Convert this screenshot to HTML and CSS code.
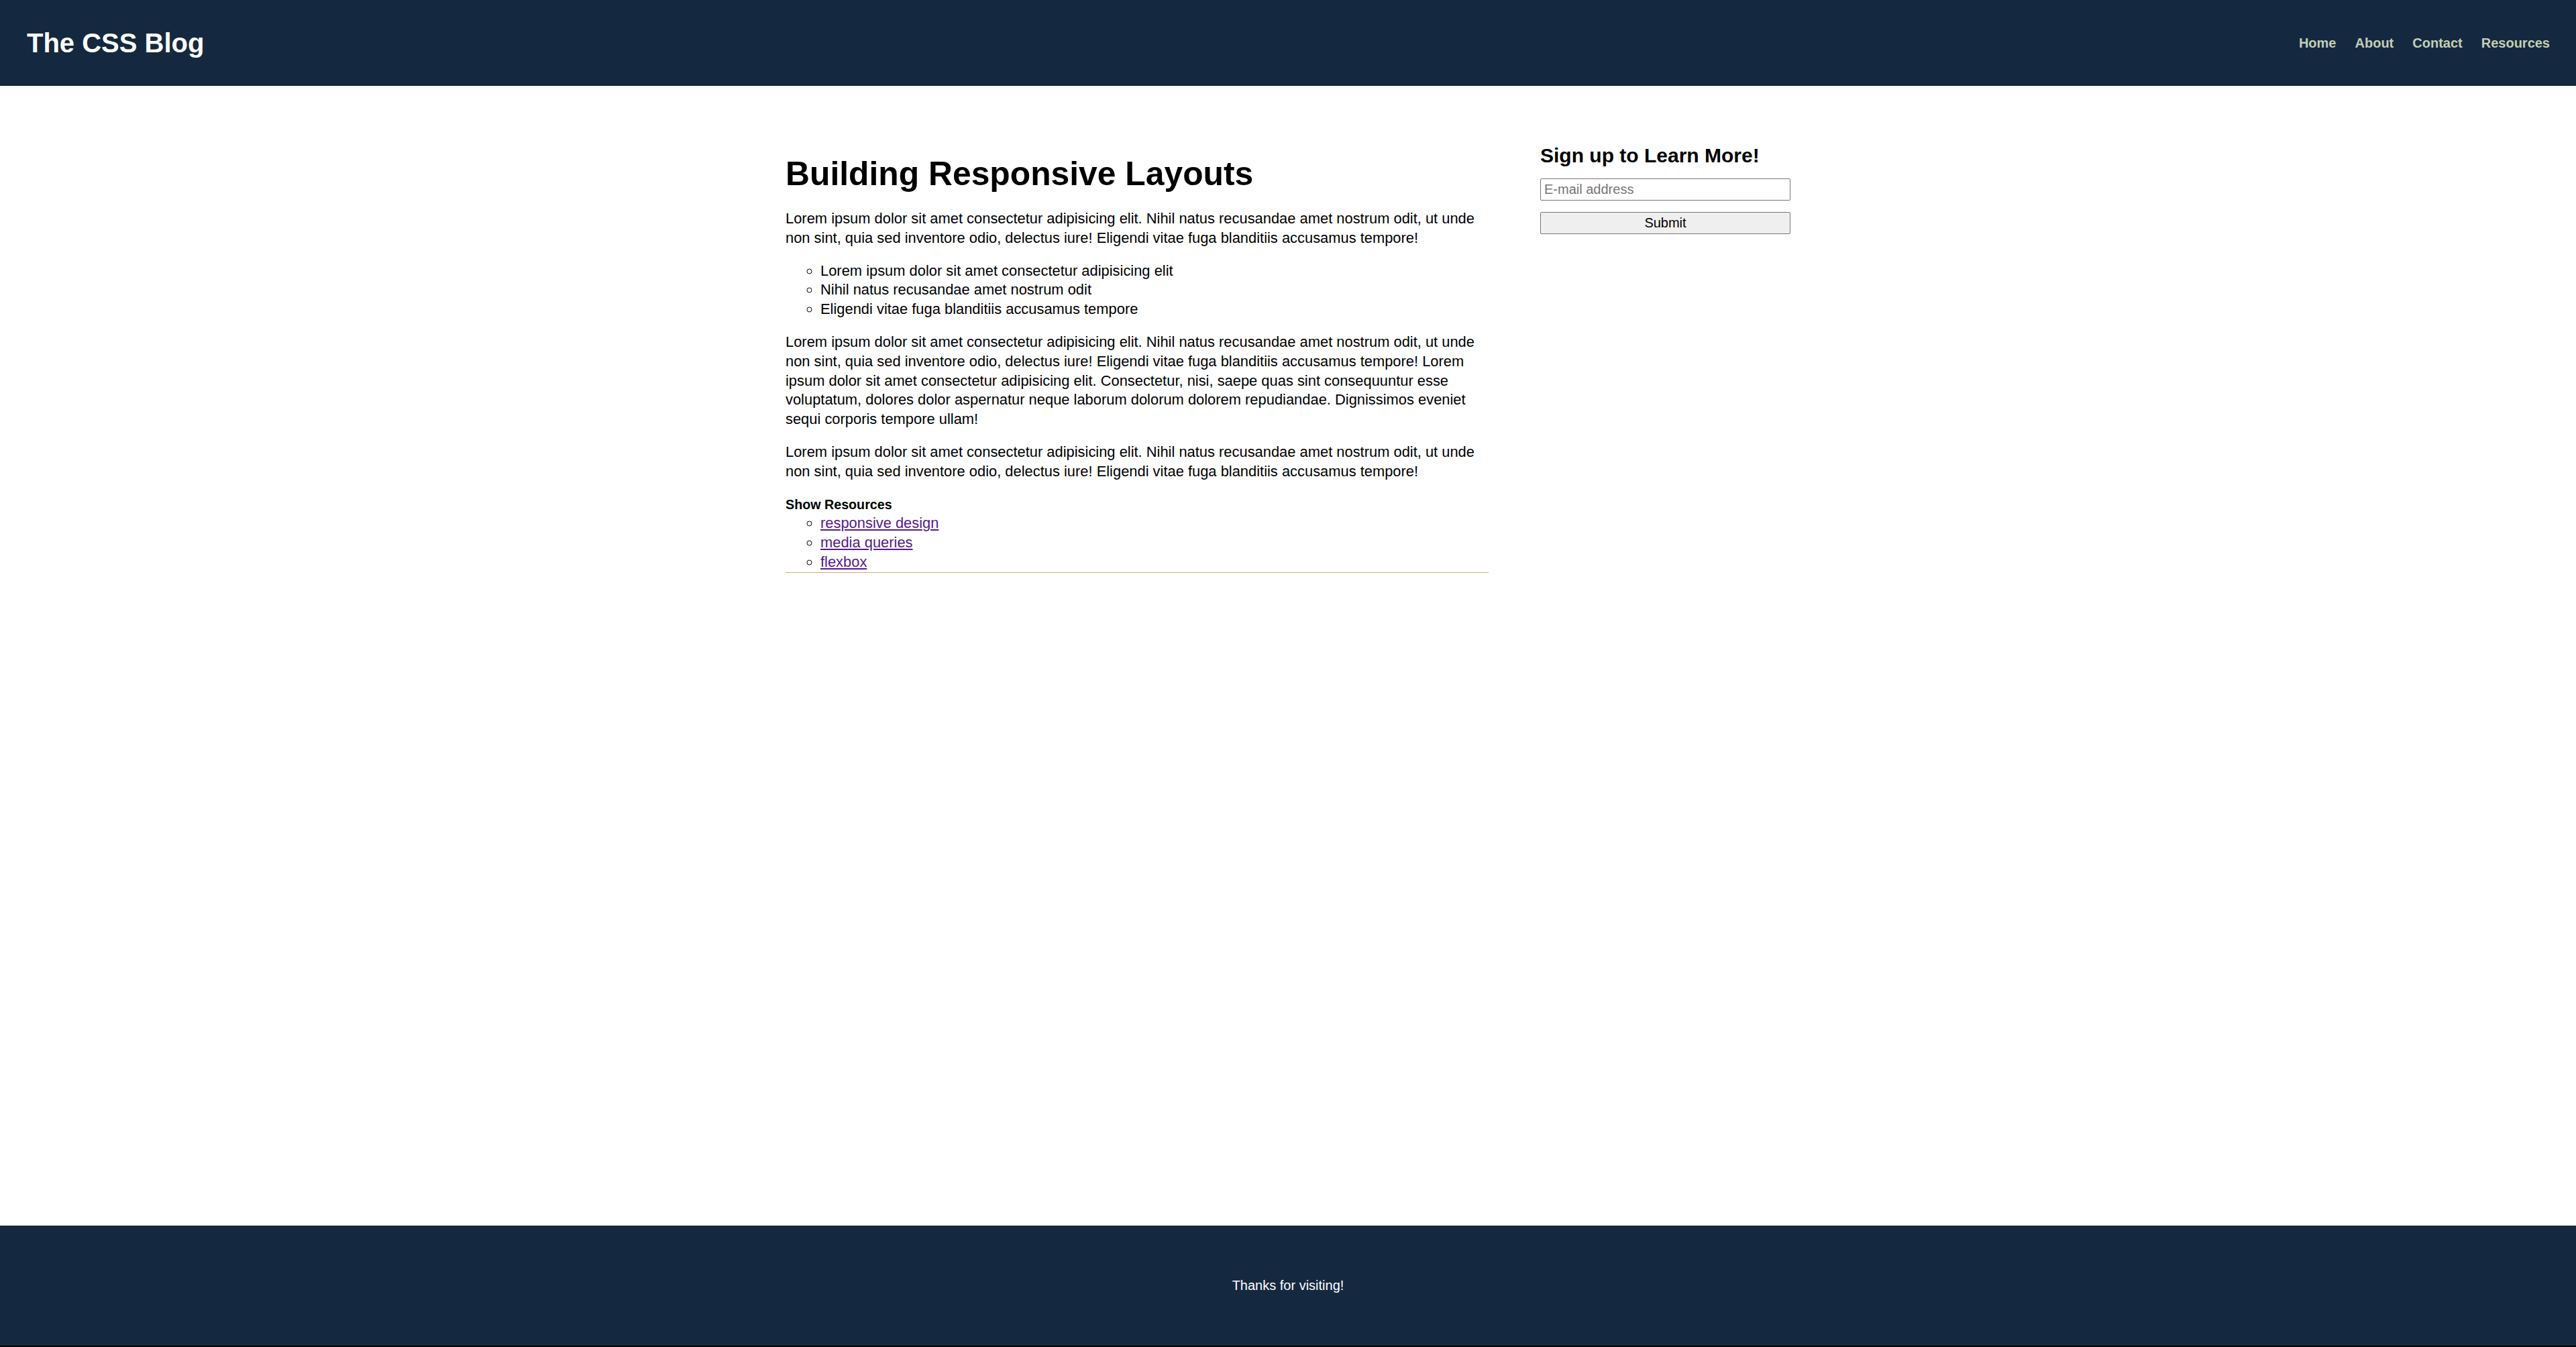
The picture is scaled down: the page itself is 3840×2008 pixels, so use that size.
FILE: index.html
```html
<!DOCTYPE html>
<html lang="en">
<head>
<meta charset="utf-8">
<title>The CSS Blog</title>
<link rel="stylesheet" href="styles.css">
</head>
<body>
<header class="site-header">
  <div class="brand">The CSS Blog</div>
  <nav class="nav">
    <a href="#">Home</a>
    <a href="#">About</a>
    <a href="#">Contact</a>
    <a href="#">Resources</a>
  </nav>
</header>
<main class="layout">
  <article class="post">
    <h1 class="post-title">Building Responsive Layouts</h1>
    <p class="text">Lorem ipsum dolor sit amet consectetur adipisicing elit. Nihil natus recusandae amet nostrum odit, ut unde non sint, quia sed inventore odio, delectus iure! Eligendi vitae fuga blanditiis accusamus tempore!</p>
    <ul class="list">
      <li>Lorem ipsum dolor sit amet consectetur adipisicing elit</li>
      <li>Nihil natus recusandae amet nostrum odit</li>
      <li>Eligendi vitae fuga blanditiis accusamus tempore</li>
    </ul>
    <p class="text">Lorem ipsum dolor sit amet consectetur adipisicing elit. Nihil natus recusandae amet nostrum odit, ut unde non sint, quia sed inventore odio, delectus iure! Eligendi vitae fuga blanditiis accusamus tempore! Lorem ipsum dolor sit amet consectetur adipisicing elit. Consectetur, nisi, saepe quas sint consequuntur esse voluptatum, dolores dolor aspernatur neque laborum dolorum dolorem repudiandae. Dignissimos eveniet sequi corporis tempore ullam!</p>
    <p class="text">Lorem ipsum dolor sit amet consectetur adipisicing elit. Nihil natus recusandae amet nostrum odit, ut unde non sint, quia sed inventore odio, delectus iure! Eligendi vitae fuga blanditiis accusamus tempore!</p>
    <div class="resources">
      <div class="resources-title">Show Resources</div>
      <ul class="list resources-list">
        <li><a href="#">responsive design</a></li>
        <li><a href="#">media queries</a></li>
        <li><a href="#">flexbox</a></li>
      </ul>
    </div>
  </article>
  <aside class="sidebar">
    <h3 class="sidebar-title">Sign up to Learn More!</h3>
    <form class="signup">
      <input class="field" type="email" placeholder="E-mail address">
      <button class="submit" type="button">Submit</button>
    </form>
  </aside>
</main>
<footer class="site-footer">Thanks for visiting!</footer>
</body>
</html>
```
FILE: styles.css
```css
* { box-sizing: border-box; }
html, body { margin: 0; padding: 0; }
body {
  font-family: "Liberation Sans", Arial, sans-serif;
  color: #000;
  background: #fff;
  min-height: 100vh;
  display: flex;
  flex-direction: column;
}
.site-header {
  height: 128px;
  background: #14293f;
  display: flex;
  align-items: center;
  justify-content: space-between;
  padding: 0 39px 0 40px;
}
.brand {
  color: #fff;
  font-weight: bold;
  font-size: 40px;
}
.nav {
  display: flex;
  gap: 28px;
}
.nav a {
  color: #c6cdb6;
  text-decoration: none;
  font-weight: bold;
  font-size: 20px;
}
.layout {
  flex: 1;
  width: 1498px;
  margin: 0 auto;
  display: grid;
  grid-template-columns: 1048px 373px;
  column-gap: 77px;
  align-items: start;
  padding-top: 62px;
}
.post { min-width: 0; }
.post-title {
  font-size: 49.8px;
  margin: 40px 0 24px;
  line-height: normal;
}
.text {
  font-size: 21.9px;
  line-height: 28.8px;
  margin: 0 0 20px;
}
.list {
  font-size: 21.9px;
  line-height: 28.8px;
  margin: 0 0 20px;
  padding-left: 52px;
  list-style: circle;
}
.resources {
  border-bottom: 1px solid #daa574;
}
.resources-title {
  font-weight: bold;
  font-size: 19.7px;
  line-height: 28.8px;
}
.resources-list { margin: 0; }
.resources-list a { color: #551a8b; }
.sidebar-title {
  font-size: 30px;
  margin: 24.5px 0 17px;
  line-height: normal;
}
.signup {
  display: flex;
  flex-direction: column;
  gap: 17px;
}
.field {
  width: 100%;
  height: 33px;
  font-family: "Liberation Sans", Arial, sans-serif;
  font-size: 20px;
  padding: 0 5px;
  border: 1px solid #767676;
  border-radius: 2px;
}
.field::placeholder { color: #757575; }
.submit {
  width: 100%;
  height: 33px;
  font-family: "Liberation Sans", Arial, sans-serif;
  font-size: 20px;
  color: #000;
  background: #efefef;
  border: 1px solid #767676;
  border-radius: 2px;
}
.site-footer {
  height: 181px;
  background: #14293f;
  border-bottom: 2px solid #000;
  color: #fff;
  font-size: 20px;
  display: flex;
  align-items: center;
  justify-content: center;
}
```
